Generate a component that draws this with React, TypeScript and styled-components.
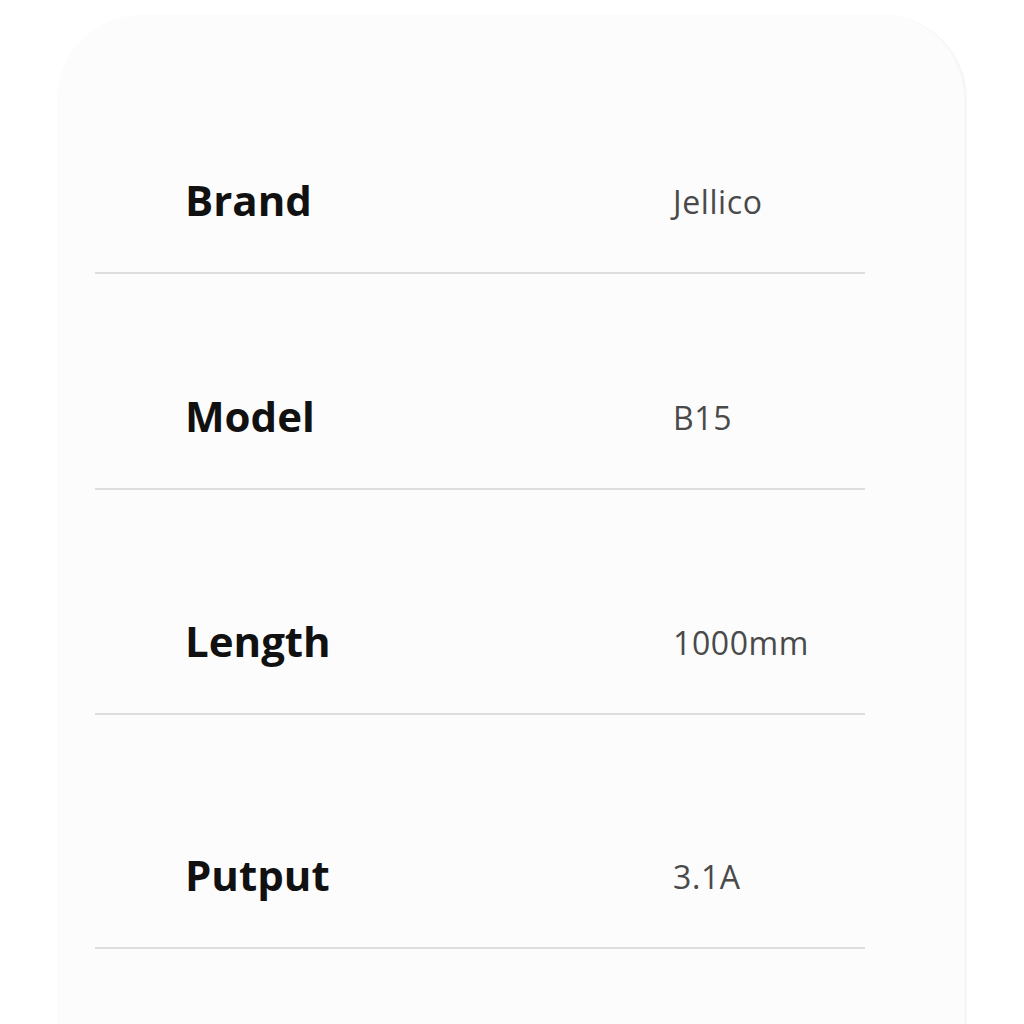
import React from "react";
import styled, { createGlobalStyle } from "styled-components";

const Global = createGlobalStyle`
  html, body { margin: 0; padding: 0; background: #ffffff; }
  body { font-family: "Open Sans", "Noto Sans", sans-serif; }
`;

const Page = styled.div`
  width: 1024px;
  height: 1024px;
  overflow: hidden;
  padding: 15px 57px 0 57px;
  box-sizing: border-box;
  background: #ffffff;
`;

const Card = styled.div`
  width: 910px;
  height: 1100px;
  box-sizing: border-box;
  background: #fcfcfc;
  border-radius: 84px 84px 0 0;
  border-right: 3px solid #f6f6f6;
  padding: 0 99px 0 38px;
  display: flex;
  flex-direction: column;
`;

const Row = styled.div<{ $h: number }>`
  height: ${(p) => p.$h}px;
  display: flex;
  align-items: flex-end;
  border-bottom: 2px solid #dedede;
  box-sizing: border-box;
  padding: 0 0 50px 90px;
`;

const Label = styled.div`
  width: 488px;
  font-size: 42px;
  font-weight: 700;
  color: #111111;
  line-height: 44px;
`;

const Value = styled.div`
  font-size: 32px;
  font-weight: 400;
  color: #4a4a4a;
  line-height: 40px;
  letter-spacing: 0.6px;
`;

const rows = [
  { label: "Brand", value: "Jellico", h: 259 },
  { label: "Model", value: "B15", h: 216 },
  { label: "Length", value: "1000mm", h: 225 },
  { label: "Putput", value: "3.1A", h: 234 },
];

export default function App() {
  return (
    <>
      <Global />
      <Page>
        <Card>
          {rows.map((r) => (
            <Row key={r.label} $h={r.h}>
              <Label>{r.label}</Label>
              <Value>{r.value}</Value>
            </Row>
          ))}
        </Card>
      </Page>
    </>
  );
}
